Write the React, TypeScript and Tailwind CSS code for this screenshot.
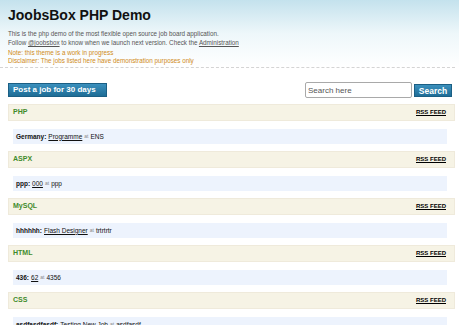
import React from "react";

type Job = { where: string; title: string; company: string };
type Category = { name: string; jobs: Job[] };

const categories: Category[] = [
  { name: "PHP", jobs: [{ where: "Germany", title: "Programme", company: "ENS" }] },
  { name: "ASPX", jobs: [{ where: "ppp", title: "000", company: "ppp" }] },
  { name: "MySQL", jobs: [{ where: "hhhhhh", title: "Flash Designer", company: "trtrtrtr" }] },
  { name: "HTML", jobs: [{ where: "436", title: "62", company: "4356" }] },
  { name: "CSS", jobs: [{ where: "asdfasdfasdf", title: "Testing New Job", company: "asdfasdf" }] },
];

function CategoryBlock({ cat }: { cat: Category }) {
  return (
    <div className="mb-[7px]">
      <div className="flex h-[17px] items-center justify-between border border-[#efeadb] bg-[#f6f3e5] pl-[4px] pr-[8px]">
        <span className="text-[7px] font-bold text-[#3f8b2c]">{cat.name}</span>
        <a href="#" className="text-[6px] font-bold text-black underline">RSS FEED</a>
      </div>
      {cat.jobs.map((job) => (
        <div
          key={job.title}
          className="mx-[5px] mt-[8px] flex h-[15px] w-[434px] items-center bg-[#edf3fd] pl-[3px] text-[6.5px] text-[#111]"
        >
          <b>{job.where}:</b>
          <a href="#" className="ml-[2px] underline">{job.title}</a>
          <span className="mx-[2px] text-[5px] text-[#888]">at</span>
          <span>{job.company}</span>
        </div>
      ))}
    </div>
  );
}

export default function App() {
  return (
    <div className="min-h-screen overflow-hidden bg-white font-['Liberation_Sans',Arial,sans-serif] text-[#222]">
      <div className="bg-gradient-to-b from-[#c4e2ed] via-[#eef7fa] via-50% to-white px-[8px] pt-[6px] pb-[2px]">
        <h1 className="text-[14px] font-bold leading-[18px] text-[#111]">JoobsBox PHP Demo</h1>
        <div className="mt-[5px] text-[6.3px] leading-[9px] text-[#555]">
          <p>This is the php demo of the most flexible open source job board application.</p>
          <p>
            Follow <a href="#" className="underline">@joobsbox</a> to know when we launch next version. Check the{" "}
            <a href="#" className="underline">Administration</a>
          </p>
        </div>
        <div className="mt-[2px] text-[6.3px] leading-[8px] text-[#d08a20]">
          <p>Note: this theme is a work in progress</p>
          <p>Disclaimer: The jobs listed here have demonstration purposes only</p>
        </div>
      </div>
      <div className="w-[455px] border-t border-dashed border-[#d4d4d4]" />

      <div className="mt-[14px] flex w-[452px] items-center justify-between pl-[8px]">
        <button className="h-[14px] w-[99px] border border-[#1b5f84] bg-gradient-to-b from-[#3b90bd] to-[#1e6d96] pl-[4px] text-left text-[8px] font-bold text-white">
          Post a job for 30 days
        </button>
        <div className="flex items-center gap-[2px]">
          <input
            placeholder="Search here"
            className="h-[16px] w-[107px] rounded-[2px] border border-[#a9a9a9] bg-white px-[2px] text-[8px] text-[#333] placeholder:text-[#555] outline-none"
          />
          <button className="h-[13px] w-[38px] border border-[#1b5f84] bg-gradient-to-b from-[#3b90bd] to-[#1e6d96] text-[8.5px] font-bold text-white">
            Search
          </button>
        </div>
      </div>

      <div className="mt-[6px] w-[455px] pl-[8px]">
        {categories.map((c) => (
          <CategoryBlock key={c.name} cat={c} />
        ))}
      </div>
    </div>
  );
}
